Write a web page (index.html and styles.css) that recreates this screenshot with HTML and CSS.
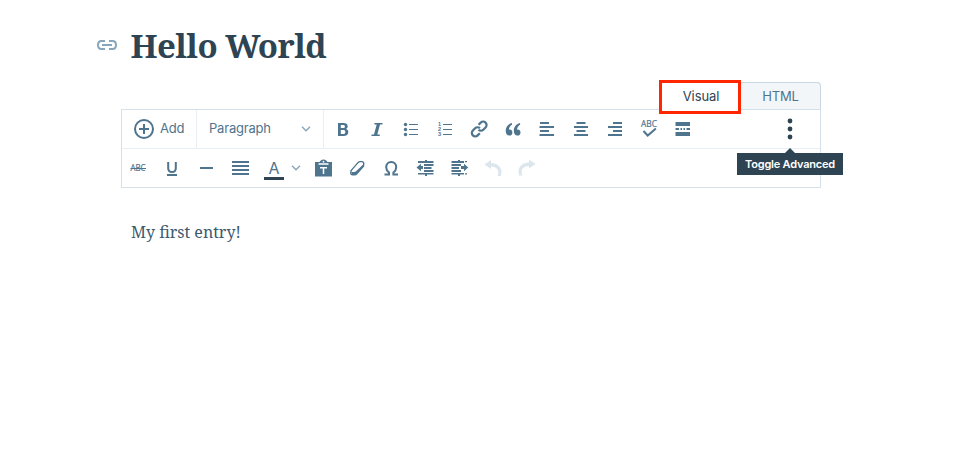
FILE: index.html
```
<!DOCTYPE html>
<html lang="en">
<head>
<meta charset="utf-8">
<title>Hello World</title>
<link rel="stylesheet" href="styles.css">
</head>
<body>
<main class="page">
  <header class="title-row">
    <svg class="permalink" width="22" height="12" viewBox="0 0 22 12"><path d="M9 2H5.500Q2 2 2 6t3.500 4H9M13 2h3.500Q20 2 20 6t-3.500 4H13M6 6h10"/></svg>
    <h1 class="title">Hello World</h1>
  </header>
  <section class="editor">
    <nav class="tabs">
      <button class="tab tab-active">Visual</button>
      <button class="tab">HTML</button>
    </nav>
    <div class="toolbar">
      <div class="row row-main">
        <button class="add"><svg class="line" width="22" height="22" viewBox="0 0 22 22"><circle cx="11" cy="11" r="9"/><path d="M11 6v10M6 11h10"/></svg><span>Add</span></button>
        <button class="format"><span>Paragraph</span><svg class="chevron" width="10" height="6" viewBox="0 0 10 6"><path d="M1 .8l4 4 4-4"/></svg></button>
        <div class="tools">
          <button class="tool"><svg viewBox="0 0 24 24"><path fill-rule="evenodd" d="M7 6h5.300c2.900 0 4.400 1.200 4.400 3.300 0 1.300-.6 2.100-1.700 2.600 1.500.4 2.300 1.500 2.300 3 0 2.600-1.700 4.100-4.800 4.100H7zM9.800 8v3h2.300c1.200 0 1.800-.5 1.800-1.500S13.300 8 12.200 8zm0 4.900V17h2.500c1.300 0 2-.7 2-2.100s-.7-2-2.100-2z"/></svg></button>
          <button class="tool"><svg viewBox="0 0 24 24"><path d="M9.400 6H17.500v1.600h-2.500l-2.700 9.800h2.500V19H6.500v-1.600H9l2.700-9.800H9.400z"/></svg></button>
          <button class="tool"><svg viewBox="0 0 24 24"><circle cx="6.500" cy="7.500" r="1.700"/><circle cx="6.500" cy="12.500" r="1.700"/><circle cx="6.500" cy="17.500" r="1.700"/><path d="M10 7h9v1h-9zm0 5h9v1h-9zm0 5h9v1h-9z"/></svg></button>
          <button class="tool"><svg viewBox="0 0 24 24"><path d="M10 7h9v1h-9zm0 5h9v1h-9zm0 5h9v1h-9z"/><text class="digit" x="5" y="9">1</text><text class="digit" x="5" y="14">2</text><text class="digit" x="5" y="19">3</text></svg></button>
          <button class="tool"><svg class="link" viewBox="0 0 24 24"><g transform="translate(12.200 12) rotate(-45)"><path d="M-2.500 3.400h-3.100a3.400 3.400 0 0 1 0-6.800h3.200A3.400 3.400 0 0 1 1 0M2.500-3.400h3.100a3.400 3.400 0 0 1 0 6.800H2.400A3.400 3.400 0 0 1-1 0"/></g></svg></button>
          <button class="tool"><svg viewBox="0 0 24 24"><path d="M11 6c-3.700.8-6.300 3.700-6.300 7.700 0 3 1.300 4.800 3.500 4.800a3.100 3.100 0 0 0 3.200-3.100c0-1.800-1.200-3-2.800-3h-.7c.2-2 1.300-3.700 3.100-4.600z"/><path d="M19.100 6c-3.700.8-6.300 3.700-6.300 7.700 0 3 1.300 4.800 3.500 4.800a3.100 3.100 0 0 0 3.200-3.100c0-1.800-1.200-3-2.800-3H16c.2-2 1.300-3.700 3.100-4.600z"/></svg></button>
          <button class="tool"><svg viewBox="0 0 24 24"><path d="M5 5h9v2H5zm-.5 4H19v2H4.500zm.5 4h9v2H5zm-.5 4H19v2H4.500z"/></svg></button>
          <button class="tool"><svg viewBox="0 0 24 24"><path d="M7.500 5h9v2h-9zM5 9h14v2H5zm2.500 4h9v2h-9zM5 17h14v2H5z"/></svg></button>
          <button class="tool"><svg viewBox="0 0 24 24"><path d="M10 5h9v2h-9zM5 9h14v2H5zm5 4h9v2h-9zm-5 4h14v2H5z"/></svg></button>
          <button class="tool"><svg viewBox="0 0 24 24"><text class="abc" x="4" y="10" textLength="16" lengthAdjust="spacingAndGlyphs">ABC</text><path class="stroke" d="M6.500 14l4.200 4.500 8.200-7"/></svg></button>
          <button class="tool"><svg viewBox="0 0 24 24"><path d="M4.500 5h14.500v4H4.500zm0 6H8v2H4.500zm5 0H11v2H9.500zm3 0H14v2h-1.500zm3 0H19v2h-3.500zm-11 4H19v4H4.500z"/></svg></button>
        </div>
        <button class="more"><svg width="6" height="22" viewBox="0 0 6 22"><circle cx="3" cy="3" r="2.400"/><circle cx="3" cy="11" r="2.400"/><circle cx="3" cy="19" r="2.400"/></svg><span class="tooltip">Toggle Advanced</span></button>
      </div>
      <div class="row row-advanced">
        <button class="tool"><svg viewBox="0 0 24 24"><text class="abc" x="4.500" y="15" textLength="15" lengthAdjust="spacingAndGlyphs">ABC</text><path d="M4.500 12h15.500v1H4.500z"/></svg></button>
        <button class="tool"><svg viewBox="0 0 24 24"><path class="stroke" d="M8.200 6v6.300c0 2.600 1.300 3.800 3.800 3.800s3.800-1.200 3.800-3.800V6"/><path d="M7 18h10v2H7z"/></svg></button>
        <button class="tool"><svg viewBox="0 0 24 24"><path d="M6 11h13v2H6z"/></svg></button>
        <button class="tool"><svg viewBox="0 0 24 24"><path d="M4 5h17v2H4zm0 4h17v2H4zm0 4h17v2H4zm0 4h17v2H4z"/></svg></button>
        <button class="tool color"><span class="letter">A</span></button>
        <button class="color-menu"><svg class="chevron" width="10" height="6" viewBox="0 0 10 6"><path d="M1 .8l4 4 4-4"/></svg></button>
        <button class="tool"><svg viewBox="0 0 24 24"><path d="M4 6h4.500l1.300-1.600Q12.500 2.500 15.200 4.400L16.500 6H21v14.500H4z"/><path class="cut" d="M7.500 8h10M9 11.800h7M12.500 11.500v6.500"/><circle class="hole" cx="12.500" cy="5.700" r=".9"/></svg></button>
        <button class="tool"><svg class="thin" viewBox="0 0 24 24"><path d="M13.200 6.500Q14 5.600 15 5.600h1.700q2.300 0 2 2.300l-.2 2.300-7 7.800q-.7.800-1.700.8H7.700q-2.200 0-1.900-2.200l.2-1.800z"/><path class="edge" d="M6.500 16h2.800q1 0 1.700-.8L18.700 8v2.200l-7 7.800q-.7.800-1.700.8H7.700q-1.500 0-1.200-2.800z"/><path class="face" d="M13.500 7.200L7 14.700h2.300l7.500-7.300z"/></svg></button>
        <button class="tool"><svg viewBox="0 0 24 24"><path class="stroke" d="M5.500 18.500H10v-2C8.200 15.100 7.200 13.500 7.200 11.300 7.200 8.200 9.200 6 12.200 6s5 2.200 5 5.300c0 2.200-1 3.800-2.800 5.200v2H19"/></svg></button>
        <button class="tool"><svg viewBox="0 0 24 24"><path d="M5 5h15.500v2H5zm6 3h9.500v2H11zm0 3h7.500v2H11zm0 3h9.500v2H11zM5 17h15.500v1.500H5zM12 4h2v1h-2zm0 14.500h2V20h-2zM3.500 11.500L8 7.800V10h2v3H8v2.200z"/></svg></button>
        <button class="tool"><svg viewBox="0 0 24 24"><path d="M4.500 5H17v2H4.500zm0 3h9.500v2H4.500zm0 3H12v2H4.500zm0 3h9.500v2H4.500zm0 3H17v1.500H4.500zM18 5h2v1.200h-2zm0 12.200h2v1.300h-2zM11 4h2v1h-2zm0 14.500h2V20h-2zm10.200-7L17 7.800V10h-3v3h3v2.200z"/></svg></button>
        <button class="tool disabled"><svg viewBox="0 0 24 24"><path d="M3.500 8.500L10 4v3c6.300.2 10.500 4 10.500 9 0 1.500-.3 2.800-.8 4h-3.100c.5-1.200.7-2.300.7-3.500 0-3.500-2.600-5.800-7.300-6V13z"/></svg></button>
        <button class="tool disabled"><svg viewBox="0 0 24 24"><path d="M20.500 8L14 3.500v3c-6.300.2-10.500 4-10.500 9 0 1.500.3 2.800.8 4h3.100c-.5-1.200-.7-2.300-.7-3.500 0-3.500 2.600-5.800 7.300-6v2.500z"/></svg></button>
      </div>
    </div>
    <p class="content">My first entry!</p>
  </section>
</main>
</body>
</html>
```
FILE: styles.css
```
* { box-sizing: border-box; }
body { margin: 0; background: #fff; color: #4f748e; font: 13px/18px Inter, sans-serif; }
.page { width: 726px; margin-left: 95px; padding-top: 26px; }
button { margin: 0; padding: 0; border: 0; background: none; color: inherit; font: inherit; }
svg { display: block; fill: currentColor; }
.title-row { display: flex; align-items: center; height: 40px; }
.permalink { margin: -2px 12.5px 0 1px; fill: none; stroke: #87a6bc; stroke-width: 2; }
.title { margin: 0; color: #2e4453; font: bold 33px/40px "Noto Serif", "DejaVu Serif", serif; letter-spacing: -.55px; white-space: nowrap; }
.editor { margin-left: 26px; }
.tabs { display: flex; justify-content: flex-end; padding-top: 14px; height: 43px; }
.tab { width: 80px; height: 27px; margin-top: 2px; border: 1px solid #c8d7e1; border-bottom: 0; border-left: 0; border-radius: 0 4px 0 0; background: #f3f6f8; letter-spacing: -.1px; }
.tab-active { position: relative; z-index: 1; width: 82px; height: 34px; margin-top: 0; padding: 0 0 2px 2px; border: 3px solid #ff2600; border-radius: 0; background: #fff; color: #2e4453; }
.toolbar { height: 79px; border: 1px solid #d5e1e9; }
.row { display: flex; align-items: center; height: 38px; }
.row-main { border-bottom: 1px solid #e9eff3; height: 39px; }
.row-advanced { margin-left: -1px; }
.add { display: flex; align-items: center; gap: 5px; width: 75px; height: 38px; padding-left: 11px; border-right: 1px solid #e9eff3; }
.add span, .format span { margin-top: -2px; letter-spacing: -.2px; }
.line { fill: none; stroke: currentColor; stroke-width: 2; }
.link { fill: none; stroke: currentColor; stroke-width: 2.2; }
.format { display: flex; align-items: center; justify-content: space-between; width: 127px; height: 38px; padding: 0 12px; border-right: 1px solid #e9eff3; }
.chevron { fill: none; stroke: #87a6bc; stroke-width: 1.4; }
.tools { display: flex; margin-left: 2px; }
.tool { display: flex; align-items: center; justify-content: center; width: 34px; height: 34px; flex: none; }
.tool svg { width: 24px; height: 24px; }
.stroke { fill: none; stroke: currentColor; stroke-width: 2; }
.thin { fill: none; stroke: currentColor; stroke-width: 1.4; }
.edge { fill: currentColor; stroke: none; }
.face { fill: #fff; stroke: none; }
.digit { font: bold 5.5px "Liberation Sans", sans-serif; }
.abc { font: 8.5px "Open Sans", sans-serif; stroke: currentColor; stroke-width: .2; }
.more { position: relative; display: flex; align-items: center; justify-content: center; width: 34px; height: 38px; margin: 0 13px 0 auto; color: #2e4453; }
.tooltip { position: absolute; z-index: 2; top: 43px; left: -36px; width: 106px; height: 22px; background: #2e4453; color: #fff; font-size: 11px; font-weight: 600; line-height: 22px; letter-spacing: -.2px; white-space: nowrap; }
.tooltip::before { content: ""; position: absolute; left: 48px; top: -5px; border: solid transparent; border-width: 0 5px 5px; border-bottom-color: #2e4453; }
.color { position: relative; }
.color::after { content: ""; position: absolute; left: 7px; bottom: 5px; width: 20px; height: 3px; background: #2e4453; }
.letter { font-size: 16px; }
.color-menu { display: flex; justify-content: flex-start; width: 15px; }
.cut { fill: none; stroke: #fff; stroke-width: 1.5; }
.hole { fill: #fff; }
.disabled { color: #dce6ed; }
.content { margin: 31px 0 0 10px; color: #3d596d; font: 16px/26px "Noto Serif", "DejaVu Serif", serif; }
```
